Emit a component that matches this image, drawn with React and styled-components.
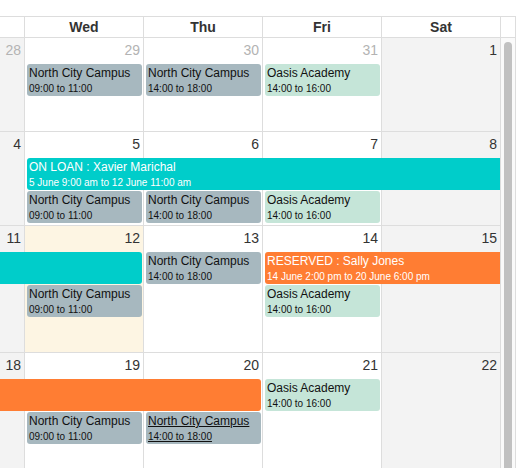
import React from "react";
import styled, { createGlobalStyle, css } from "styled-components";

const GlobalStyle = createGlobalStyle`
  html, body {
    margin: 0;
    padding: 0;
    overflow: hidden;
    background: #fff;
  }
  body {
    font-family: "Liberation Sans", Arial, sans-serif;
    color: #333;
  }
`;

// data
const HEADERS = ["Wed", "Thu", "Fri", "Sat"];

const campusAm = { kind: "campus", title: "North City Campus", time: "09:00 to 11:00" };
const campusPm = { kind: "campus", title: "North City Campus", time: "14:00 to 18:00" };
const oasis = { kind: "oasis", title: "Oasis Academy", time: "14:00 to 16:00" };

const WEEKS = [
  {
    height: 94,
    days: [
      { n: 28, other: true, weekend: true },
      { n: 29, other: true },
      { n: 30, other: true },
      { n: 31, other: true },
      { n: 1, weekend: true },
    ],
    events: [
      { ...campusAm, col: 2, span: 1, row: 2 },
      { ...campusPm, col: 3, span: 1, row: 2 },
      { ...oasis, col: 4, span: 1, row: 2 },
    ],
  },
  {
    height: 94,
    days: [
      { n: 4, weekend: true },
      { n: 5 },
      { n: 6 },
      { n: 7 },
      { n: 8, weekend: true },
    ],
    events: [
      {
        kind: "loan",
        title: "ON LOAN : Xavier Marichal",
        time: "5 June 9:00 am to 12 June 11:00 am",
        col: 2,
        span: 4,
        row: 2,
        continues: true,
      },
      { ...campusAm, col: 2, span: 1, row: 3 },
      { ...campusPm, col: 3, span: 1, row: 3 },
      { ...oasis, col: 4, span: 1, row: 3 },
    ],
  },
  {
    height: 127,
    days: [
      { n: 11, weekend: true },
      { n: 12, today: true },
      { n: 13 },
      { n: 14 },
      { n: 15, weekend: true },
    ],
    events: [
      { kind: "loan", col: 1, span: 2, row: 2, continued: true },
      { ...campusPm, col: 3, span: 1, row: 2 },
      {
        kind: "reserved",
        title: "RESERVED : Sally Jones",
        time: "14 June 2:00 pm to 20 June 6:00 pm",
        col: 4,
        span: 2,
        row: 2,
        continues: true,
      },
      { ...campusAm, col: 2, span: 1, row: 3 },
      { ...oasis, col: 4, span: 1, row: 3 },
    ],
  },
  {
    height: 130,
    days: [
      { n: 18, weekend: true },
      { n: 19 },
      { n: 20 },
      { n: 21 },
      { n: 22, weekend: true },
    ],
    events: [
      { kind: "reserved", col: 1, span: 3, row: 2, continued: true },
      { ...oasis, col: 4, span: 1, row: 2 },
      { ...campusAm, col: 2, span: 1, row: 3 },
      { ...campusPm, col: 3, span: 1, row: 3, hover: true },
    ],
  },
];

const COLORS = {
  campus: { bg: "#a7b8bf", fg: "#111" },
  oasis: { bg: "#c5e5d8", fg: "#111" },
  loan: { bg: "#00cdca", fg: "#fff" },
  reserved: { bg: "#ff7d33", fg: "#fff" },
};

const App = () => {
  return (
    <>
      <GlobalStyle />
      <Calendar>
        <HeaderRow>
          <HeadCell />
          {HEADERS.map((h) => (
            <HeadCell key={h}>{h}</HeadCell>
          ))}
          <HeadGutter />
        </HeaderRow>
        <Body>
          <Weeks>
            {WEEKS.map((week, i) => (
              <Week key={i} $height={week.height}>
                {week.days.map((d, j) => (
                  <DayCell
                    key={d.n}
                    $col={j + 1}
                    $other={d.other}
                    $weekend={d.weekend}
                    $today={d.today}
                  >
                    {d.n}
                  </DayCell>
                ))}
                {week.events.map((ev, k) => (
                  <Event
                    key={k}
                    $kind={ev.kind}
                    $col={ev.col}
                    $span={ev.span}
                    $row={ev.row}
                    $continues={ev.continues}
                    $continued={ev.continued}
                    $hover={ev.hover}
                  >
                    {ev.title && <EventTitle>{ev.title}</EventTitle>}
                    {ev.time && <EventTime>{ev.time}</EventTime>}
                  </Event>
                ))}
              </Week>
            ))}
          </Weeks>
          <ScrollTrack>
            <ScrollThumb />
          </ScrollTrack>
        </Body>
      </Calendar>
    </>
  );
};

export default App;

const Calendar = styled.div`
  margin-top: 16px;
  width: 516px;
  height: 452px;
  display: flex;
  flex-direction: column;
  overflow: hidden;
`;

const COLUMNS = "25px repeat(4, 119px)";

const HeaderRow = styled.div`
  display: grid;
  grid-template-columns: ${COLUMNS} 15px;
  border-top: 1px solid #ddd;
  border-bottom: 1px solid #ddd;
`;

const HeadCell = styled.div`
  box-sizing: border-box;
  height: 20px;
  line-height: 20px;
  border-right: 1px solid #ddd;
  text-align: center;
  font-size: 14px;
  font-weight: bold;
  color: #333;
`;

const HeadGutter = styled.div`
  border-right: 1px solid #ddd;
`;

const Body = styled.div`
  flex: 1;
  display: flex;
  min-height: 0;
`;

const Weeks = styled.div`
  width: 501px;
  display: flex;
  flex-direction: column;
`;

const Week = styled.div`
  flex: 0 0 auto;
  box-sizing: border-box;
  height: ${({ $height }) => $height}px;
  display: grid;
  grid-template-columns: ${COLUMNS};
  grid-template-rows: 26px 33px 33px 1fr;
  border-bottom: 1px solid #ddd;
`;

const DayCell = styled.div`
  grid-row: 1 / -1;
  grid-column: ${({ $col }) => $col};
  border-right: 1px solid #ddd;
  padding: 2px 3px 0 0;
  text-align: right;
  font-size: 14px;
  line-height: 20px;
  color: ${({ $other }) => ($other ? "#b3b3b3" : "#333")};
  background: ${({ $weekend, $today }) =>
    $today ? "#fdf5e3" : $weekend ? "#f3f3f3" : "#fff"};
`;

const Event = styled.div`
  grid-row: ${({ $row }) => $row};
  grid-column: ${({ $col, $span }) => `${$col} / span ${$span}`};
  height: 32px;
  box-sizing: border-box;
  padding: 2px 2px 0;
  overflow: hidden;
  white-space: nowrap;
  margin: 0 ${({ $continues }) => ($continues ? "1px" : "2px")} 1px
    ${({ $continued }) => ($continued ? "0" : "2px")};
  border-radius: ${({ $continues, $continued }) =>
    `${$continued ? 0 : 3}px ${$continues ? 0 : 3}px ${$continues ? 0 : 3}px ${
      $continued ? 0 : 3
    }px`};
  background: ${({ $kind }) => COLORS[$kind].bg};
  color: ${({ $kind }) => COLORS[$kind].fg};

  ${({ $hover }) =>
    $hover &&
    css`
      text-decoration: underline;
      cursor: pointer;
    `}
`;

const EventTitle = styled.div`
  font-size: 12px;
  line-height: 15px;
`;

const EventTime = styled.div`
  font-size: 10px;
  line-height: 15px;
`;

const ScrollTrack = styled.div`
  width: 14px;
  border-right: 1px solid #ddd;
  background: #fafafa;
  display: flex;
  justify-content: center;
  padding-top: 4px;
`;

const ScrollThumb = styled.div`
  width: 8px;
  height: 600px;
  border-radius: 4px;
  background: #c1c1c1;
`;
